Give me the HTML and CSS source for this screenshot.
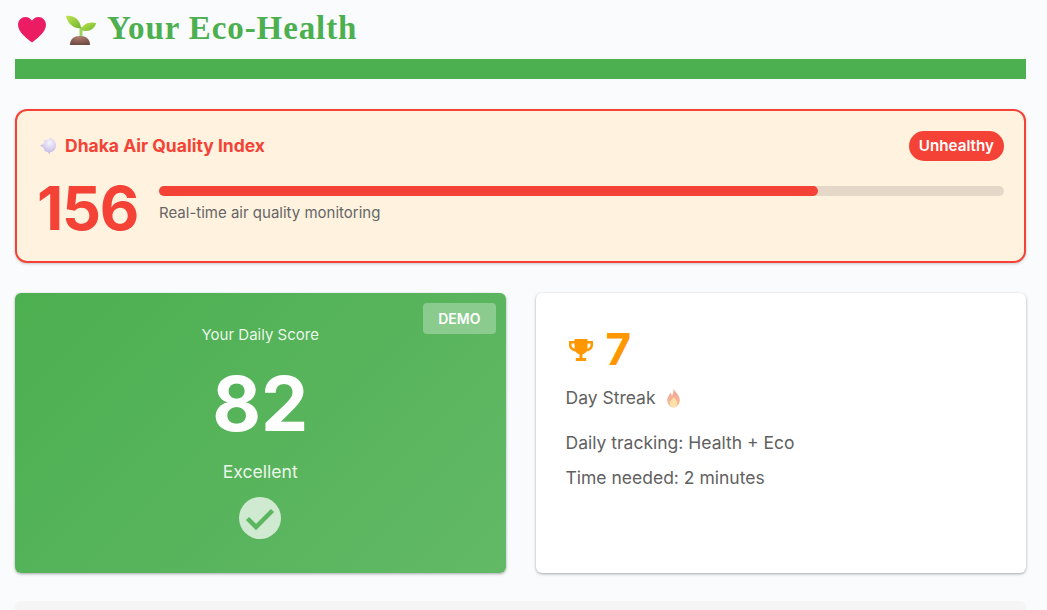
FILE: index.html
```html
<!DOCTYPE html>
<html lang="en">
  <head>
    <meta charset="UTF-8" />
    <meta name="viewport" content="width=device-width, initial-scale=1.0" />
    <title>Your Eco-Health</title>
    <link rel="stylesheet" href="styles.css">
  </head>
  <body>
    <h1 class="page-title">
      <svg class="title-icon heart" viewBox="0 0 32 30" aria-hidden="true">
        <path d="M16 28.500C11 24.500 1 17.500 1 9.500 1 4.500 4.800 1 9 1c3 0 5.500 1.400 7 4 1.500-2.600 4-4 7-4 4.200 0 8 3.500 8 8.500 0 8-10 15-15 19z" fill="#ec1c63" />
      </svg>
      <svg class="title-icon sprout" viewBox="0 0 30 30" aria-hidden="true">
        <defs>
          <linearGradient id="leaf" x1="0" y1="0" x2="1" y2="1">
            <stop offset="0" stop-color="#c2e54f" />
            <stop offset="1" stop-color="#6fb52f" />
          </linearGradient>
          <radialGradient id="soil" cx="0.45" cy="0.15" r="0.9">
            <stop offset="0" stop-color="#ad7c6e" />
            <stop offset="1" stop-color="#6b463d" />
          </radialGradient>
        </defs>
        <path d="M15 23V12" fill="none" stroke="#9ad45f" stroke-width="3" />
        <path d="M15 13C9 14 2 10 0 1c7-1 14 3 15 12z" fill="url(#leaf)" />
        <path d="M15 15c1-5 7-9 15-7-1 6-8 10-15 7z" fill="url(#leaf)" />
        <path d="M4 30c0-6 4-9 10-9s10 3 10 9z" fill="url(#soil)" />
      </svg>
      <span class="title-text">Your Eco-Health</span>
    </h1>
    <div class="title-bar"></div>

    <section class="aqi-card">
      <div class="aqi-head">
        <h2 class="aqi-title">
          <svg class="aqi-icon" viewBox="0 0 18 18" aria-hidden="true">
            <defs>
              <radialGradient id="haze" cx="0.6" cy="0.3" r="0.75">
                <stop offset="0" stop-color="#f6f4fc" />
                <stop offset="1" stop-color="#bdb2e2" />
              </radialGradient>
            </defs>
            <path d="M0 9l4-2 1-4 4 0 1-2c3 0 7 3 7 8 0 4-3 7-6 7l-1 2-2-2-3-1-1-3z" fill="url(#haze)" />
          </svg>
          Dhaka Air Quality Index
        </h2>
        <span class="aqi-badge">Unhealthy</span>
      </div>
      <div class="aqi-body">
        <div class="aqi-value">156</div>
        <div class="aqi-meter">
          <div class="meter-track"><div class="meter-fill" style="width: 78%"></div></div>
          <p class="aqi-note">Real-time air quality monitoring</p>
        </div>
      </div>
    </section>

    <div class="card-grid">
      <section class="card score-card">
        <span class="demo-tag">DEMO</span>
        <p class="score-label">Your Daily Score</p>
        <div class="score-value">82</div>
        <p class="score-rating">Excellent</p>
        <svg class="score-check" viewBox="0 0 42 42" aria-hidden="true">
          <circle cx="21" cy="21" r="21" fill="#d0e9d1" />
          <path d="M8.500 21.500l8.500 8.500 16.500-16.500" fill="none" stroke="#5cb660" stroke-width="4.500" />
        </svg>
      </section>

      <section class="card streak-card">
        <div class="streak-top">
          <svg class="trophy" viewBox="0 0 24 22" aria-hidden="true">
            <path d="M5.500 0h13v2H24v4c0 3.500-2.500 6-6.500 6.400-1 1.500-2.300 2.500-4 2.900V19h3.700v3H6.800v-3h3.700v-3.700c-1.700-.4-3-1.400-4-2.900C2.500 12 0 9.500 0 6V2h5.500V0zm0 4.500H2.500V6c0 1.800 1.300 3.200 3.300 3.800-.2-1-.3-2-.3-3.300v-2zm13 0v2c0 1.300-.1 2.300-.3 3.300 2-.6 3.300-2 3.300-3.800V4.500h-3z" fill="#ff9800" />
          </svg>
          <span class="streak-value">7</span>
        </div>
        <p class="streak-label">
          Day Streak
          <svg class="flame" viewBox="1.500 0.500 13 19" aria-hidden="true">
            <defs>
              <linearGradient id="flame" x1="0" y1="0" x2="0" y2="1">
                <stop offset="0" stop-color="#f2a093" />
                <stop offset="1" stop-color="#fac094" />
              </linearGradient>
            </defs>
            <path d="M8 1c1 3 6 6 6 11 0 4-3 7-6 7s-6-3-6-7c0-3 2-4 3-7 1 1 1.500 2 1.500 3C7.500 6 8.500 4 8 1z" fill="url(#flame)" />
            <path d="M8 9c1.500 2 3.500 3.500 3.500 6S9.500 19 8 19s-3.500-1.500-3.500-4S7.500 11.500 8 9z" fill="#fde3ab" />
          </svg>
        </p>
        <div class="streak-details">
          <p>Daily tracking: Health + Eco</p>
          <p>Time needed: 2 minutes</p>
        </div>
      </section>
    </div>

    <section class="next-card"></section>
  </body>
</html>
```

FILE: styles.css
```css
html,
body {
  height: 100%;
  overflow: hidden;
}
body {
  margin: 0;
  padding: 0 21px 0 15px;
  background-color: #fafbfd;
  font-family: Inter, sans-serif;
  color: #616161;
}
p,
h1,
h2 {
  margin: 0;
}
.page-title {
  display: flex;
  align-items: center;
  height: 59px;
  padding-left: 2px;
  font-family: "Liberation Serif", serif;
  font-size: 33px;
  font-weight: bold;
  letter-spacing: 0.900px;
  color: #4caf50;
}
.title-text {
  margin-bottom: 2px;
}
.title-icon {
  flex: none;
}
.heart {
  width: 30px;
  height: 28px;
}
.sprout {
  width: 30px;
  height: 30px;
  margin-left: 19px;
  margin-right: 11px;
}
.title-bar {
  height: 20px;
  background-color: #4caf50;
}
.aqi-card {
  box-sizing: border-box;
  height: 154px;
  margin-top: 30px;
  padding: 20px 20px 0;
  background-color: #fff3e0;
  border: 2px solid #f44336;
  border-radius: 12px;
  box-shadow: 0 1px 3px rgba(0, 0, 0, 0.2);
}
.aqi-head {
  display: flex;
  align-items: center;
  justify-content: space-between;
}
.aqi-title {
  display: flex;
  align-items: center;
  gap: 8px;
  margin-bottom: 2px;
  font-size: 17.500px;
  font-weight: 650;
  color: #f44336;
}
.aqi-icon {
  width: 17px;
  height: 17px;
  margin-left: 3px;
}
.aqi-badge {
  padding: 5px 10px;
  background-color: #f44336;
  border-radius: 15px;
  font-size: 15.200px;
  font-weight: 600;
  line-height: 20px;
  color: white;
}
.aqi-body {
  display: flex;
  gap: 21px;
  margin-top: 15px;
}
.aqi-value {
  font-size: 61px;
  font-weight: 700;
  letter-spacing: -1.300px;
  line-height: 64px;
  color: #f44336;
}
.aqi-meter {
  flex: 1;
  margin-top: 10px;
}
.meter-track {
  height: 10px;
  background-color: #e5d8c8;
  border-radius: 5px;
}
.meter-fill {
  height: 100%;
  background-color: #f44336;
  border-radius: 5px;
}
.aqi-note {
  margin-top: 8px;
  font-size: 15px;
  line-height: 18px;
  color: #666;
}
.card-grid {
  display: grid;
  grid-template-columns: 1fr 1fr;
  gap: 30px;
  margin-top: 30px;
}
.card {
  box-sizing: border-box;
  height: 280px;
  border-radius: 6px;
  box-shadow: 0 1px 3px rgba(0, 0, 0, 0.35);
}
.score-card {
  position: relative;
  display: flex;
  flex-direction: column;
  align-items: center;
  padding-top: 33px;
  background: linear-gradient(135deg, #4caf50, #62b966);
  color: white;
}
.demo-tag {
  position: absolute;
  top: 10px;
  right: 10px;
  padding: 8px 15px;
  background-color: rgba(255, 255, 255, 0.3);
  border-radius: 4px;
  font-size: 14px;
  font-weight: 600;
  line-height: 15px;
}
.score-label {
  font-size: 15px;
  line-height: 17px;
  color: rgba(255, 255, 255, 0.9);
}
.score-value {
  margin-top: 17px;
  font-size: 75px;
  font-weight: 700;
  line-height: 87px;
}
.score-rating {
  margin-top: 14px;
  font-size: 17.600px;
  line-height: 22px;
  color: rgba(255, 255, 255, 0.9);
}
.score-check {
  width: 42px;
  height: 42px;
  margin-top: 14px;
}
.streak-card {
  padding: 30px;
  background-color: white;
}
.streak-top {
  display: flex;
  align-items: center;
  gap: 13px;
}
.trophy {
  width: 24px;
  height: 22px;
  margin-left: 3px;
}
.streak-value {
  font-size: 44px;
  font-weight: 700;
  line-height: 53px;
  color: #ff9800;
}
.streak-label {
  display: flex;
  align-items: center;
  gap: 10px;
  margin-top: 10px;
  font-size: 17.500px;
  line-height: 24px;
}
.flame {
  width: 15px;
  height: 20px;
}
.streak-details {
  display: flex;
  flex-direction: column;
  gap: 11px;
  margin-top: 21px;
  font-size: 17.500px;
  line-height: 24px;
}
.next-card {
  height: 100px;
  margin-top: 28px;
  background-color: #f5f5f5;
  border-radius: 6px;
  box-shadow: 0 1px 2px rgba(0, 0, 0, 0.05);
}
```
